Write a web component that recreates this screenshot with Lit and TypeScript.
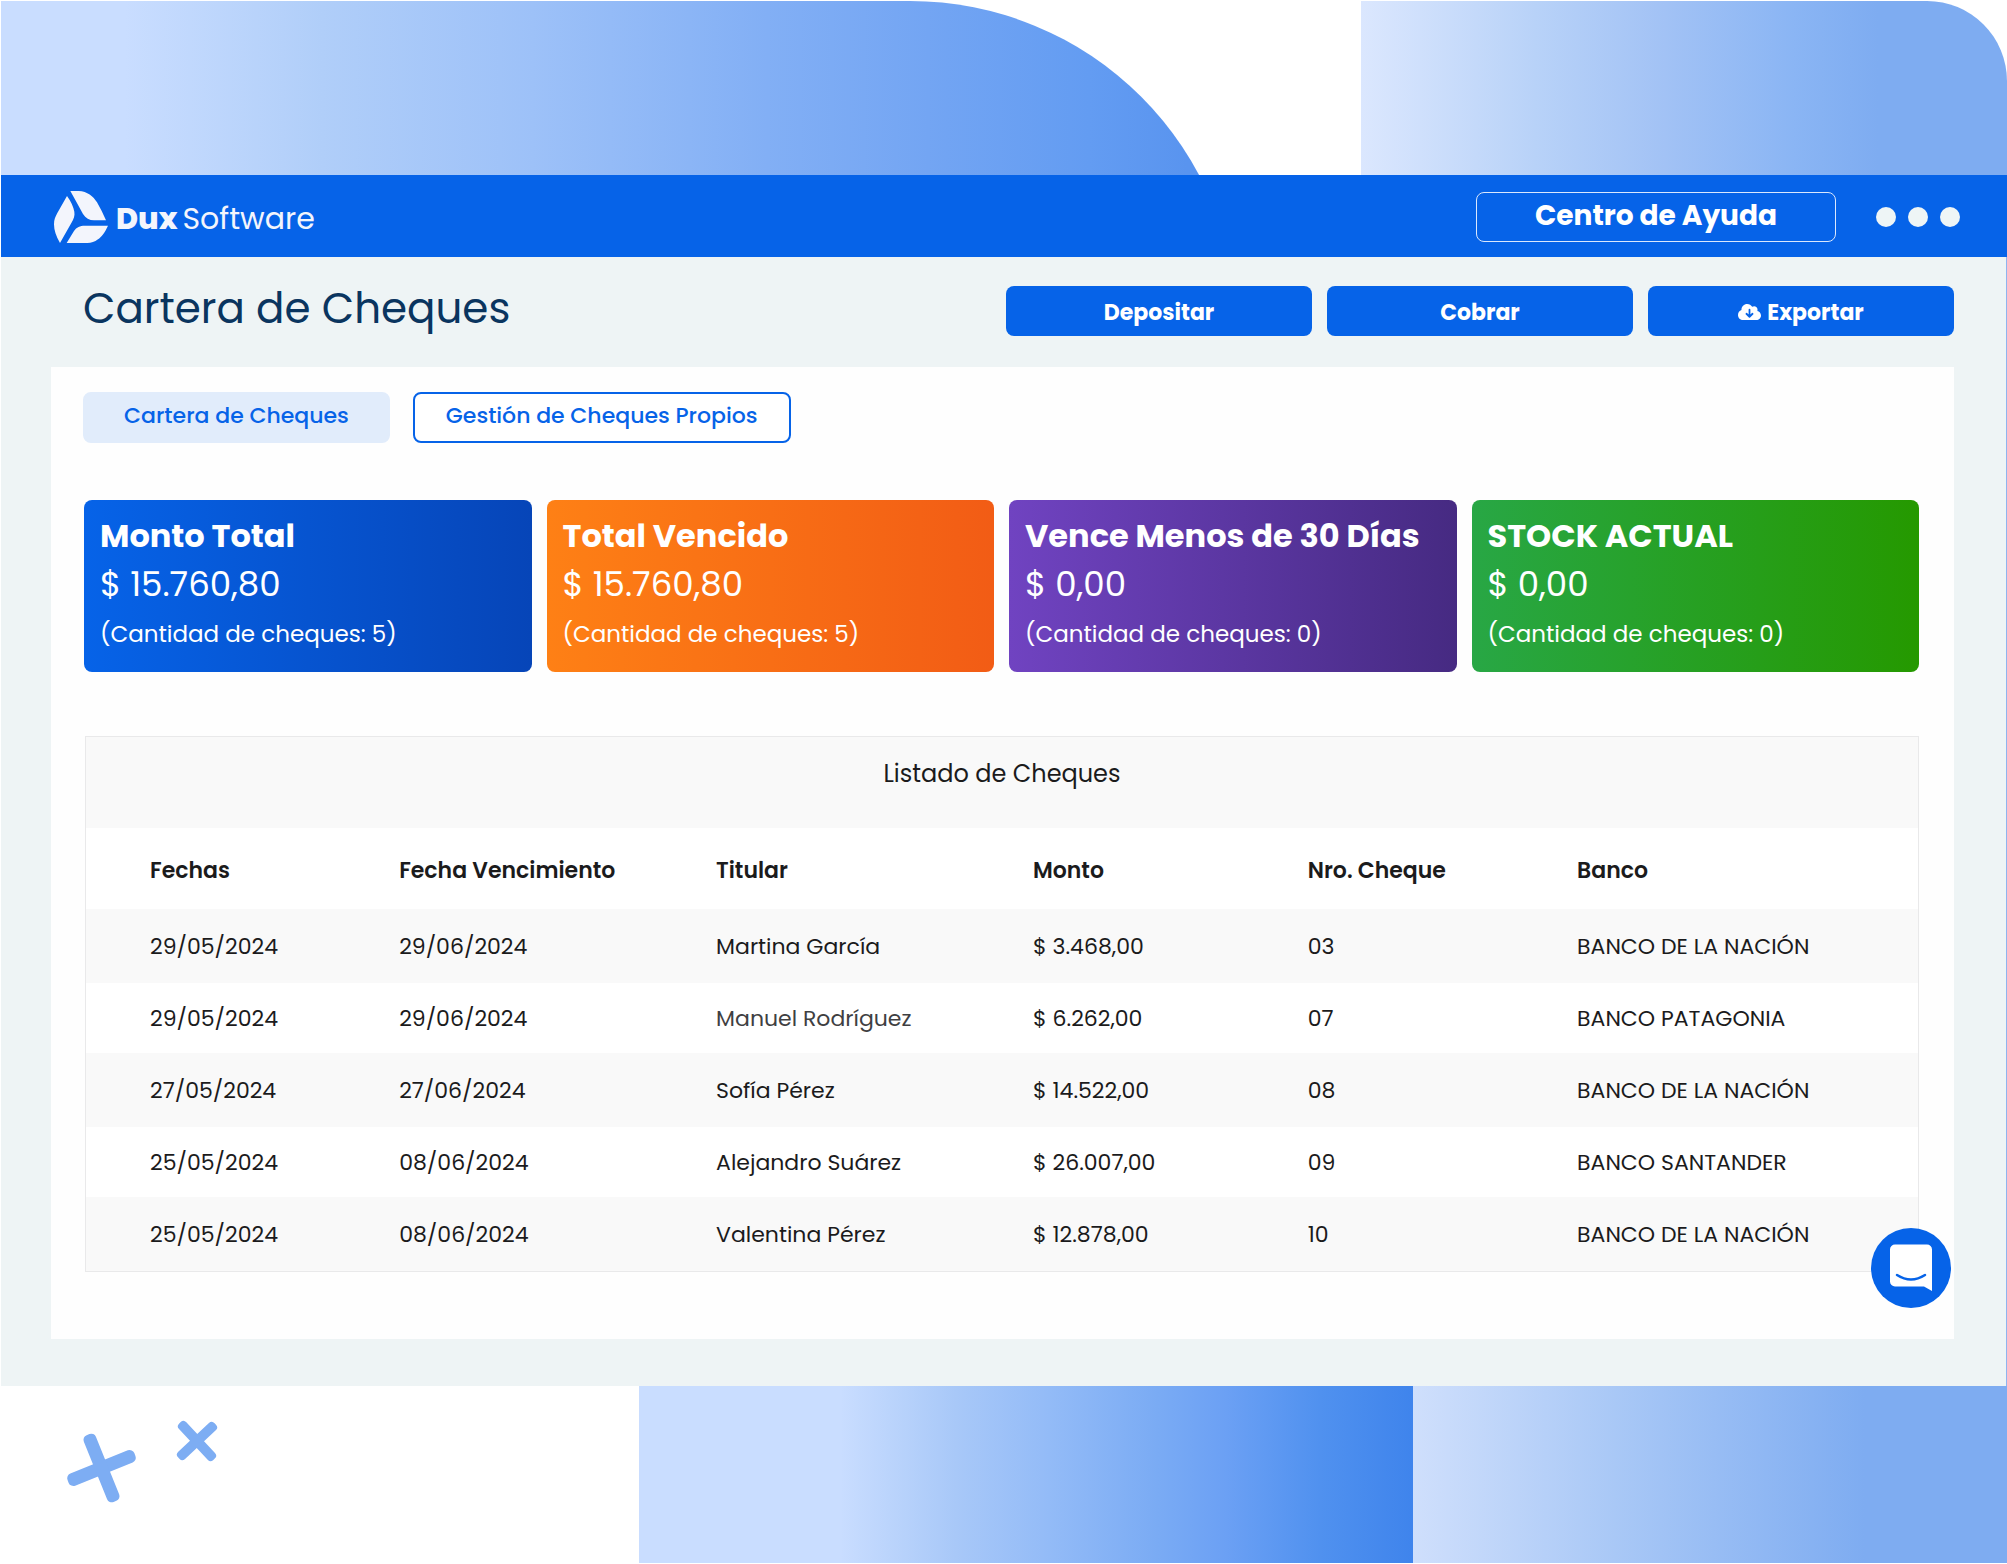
import { LitElement, html, css } from "lit";
import { customElement } from "lit/decorators.js";
import { classMap } from "lit/directives/class-map.js";

interface Summary {
  tone: string;
  title: string;
  amount: string;
  count: number;
}

interface Cheque {
  issued: string;
  due: string;
  holder: string;
  amount: string;
  number: string;
  bank: string;
  muted?: boolean;
}

const SUMMARIES: Summary[] = [
  { tone: "blue", title: "Monto Total", amount: "15.760,80", count: 5 },
  { tone: "orange", title: "Total Vencido", amount: "15.760,80", count: 5 },
  { tone: "purple", title: "Vence Menos de 30 Días", amount: "0,00", count: 0 },
  { tone: "green", title: "STOCK ACTUAL", amount: "0,00", count: 0 },
];

const COLUMNS = ["Fechas", "Fecha Vencimiento", "Titular", "Monto", "Nro. Cheque", "Banco"];

const CHEQUES: Cheque[] = [
  { issued: "29/05/2024", due: "29/06/2024", holder: "Martina García", amount: "3.468,00", number: "03", bank: "BANCO DE LA NACIÓN" },
  { issued: "29/05/2024", due: "29/06/2024", holder: "Manuel Rodríguez", amount: "6.262,00", number: "07", bank: "BANCO PATAGONIA", muted: true },
  { issued: "27/05/2024", due: "27/06/2024", holder: "Sofía Pérez", amount: "14.522,00", number: "08", bank: "BANCO DE LA NACIÓN" },
  { issued: "25/05/2024", due: "08/06/2024", holder: "Alejandro Suárez", amount: "26.007,00", number: "09", bank: "BANCO SANTANDER" },
  { issued: "25/05/2024", due: "08/06/2024", holder: "Valentina Pérez", amount: "12.878,00", number: "10", bank: "BANCO DE LA NACIÓN" },
];

@customElement("app-topbar")
export class AppTopbar extends LitElement {
  static styles = css`
    :host {
      display: flex;
      align-items: center;
      box-sizing: border-box;
      height: 82px;
      padding: 2px 47px 0 53px;
      background: #0663e8;
      font-family: Poppins, Inter, sans-serif;
    }
    .brand {
      display: flex;
      align-items: center;
      gap: 8px;
      color: #f3f5fc;
      text-decoration: none;
      font-size: 30px;
      line-height: 40px;
    }
    .mark {
      display: block;
      width: 54px;
      height: 52px;
    }
    .name {
      display: flex;
      gap: 5px;
      padding-top: 3px;
      font-weight: 400;
    }
    .name strong {
      font-weight: 800;
    }
    .help {
      box-sizing: border-box;
      width: 360px;
      height: 50px;
      margin-left: auto;
      padding: 0 0 2px;
      border: 1px solid #dbe8fd;
      border-radius: 8px;
      background: none;
      color: #fff;
      font: inherit;
      font-size: 28px;
      font-weight: 700;
      cursor: pointer;
    }
    .more {
      display: flex;
      gap: 12px;
      margin-left: 40px;
      padding: 0;
      border: 0;
      background: none;
      cursor: pointer;
    }
    .dot {
      width: 20px;
      height: 20px;
      border-radius: 50%;
      background: #eef5f6;
    }
  `;

  render() {
    return html`
      <a class="brand" href="#">
        <svg class="mark" viewBox="28 30 162 156" fill="#f3f5fc" aria-hidden="true">
          <path d="M77 30H102C128 31 146 46 157 64Q172 90 184 118H148C134 118 123 112 115 99Q97 66 77 30Z" />
          <path d="M67 45Q84 68 89 92C91 104 87 114 80 126L46 186C34 166 28 148 28 130C28 116 32 107 38 96Z" />
          <path d="M190 134C180 156 170 168 160 175C150 183 140 186 128 186H66L88 150C96 138 106 134 120 134Z" />
        </svg>
        <span class="name"><strong>Dux</strong><span>Software</span></span>
      </a>
      <button class="help" type="button">Centro de Ayuda</button>
      <button class="more" type="button" aria-label="Más opciones">
        <span class="dot"></span><span class="dot"></span><span class="dot"></span>
      </button>
    `;
  }
}

@customElement("summary-cards")
export class SummaryCards extends LitElement {
  static styles = css`
    :host {
      display: grid;
      grid-template-columns: repeat(4, 1fr);
      gap: 15px;
    }
    .card {
      padding: 12px 16px;
      border-radius: 8px;
      color: #fff;
      line-height: 48px;
      white-space: nowrap;
    }
    .title {
      margin: 0;
      font-size: 32px;
      font-weight: 700;
    }
    .amount {
      margin: 0;
      font-size: 34px;
      font-weight: 400;
    }
    .count {
      margin: 0;
      font-size: 23px;
      font-weight: 400;
      line-height: 52px;
    }
    .blue {
      background: linear-gradient(90deg, #0663e8, #0645b8);
    }
    .orange {
      background: linear-gradient(90deg, #fe8015, #f25c15);
    }
    .purple {
      background: linear-gradient(90deg, #7043c1, #462a82);
    }
    .green {
      background: linear-gradient(90deg, #28a745, #259900);
    }
  `;

  render() {
    return SUMMARIES.map(
      (s) => html`
        <section class=${classMap({ card: true, [s.tone]: true })}>
          <h2 class="title">${s.title}</h2>
          <p class="amount">$ ${s.amount}</p>
          <p class="count">(Cantidad de cheques: ${s.count})</p>
        </section>
      `
    );
  }
}

@customElement("cheque-table")
export class ChequeTable extends LitElement {
  static styles = css`
    :host {
      display: block;
      border: 1px solid #e9e9ea;
      background: #fff;
      color: #1b1b1c;
    }
    .table {
      width: 100%;
      table-layout: fixed;
      border-collapse: collapse;
      font-size: 22px;
    }
    .caption {
      padding-bottom: 18px;
      background: #f9f9f9;
      font-size: 24px;
      line-height: 73px;
    }
    .head,
    .cell {
      padding: 0 0 0 64px;
      text-align: left;
      white-space: nowrap;
    }
    .head {
      height: 81px;
      padding-top: 4px;
      box-sizing: border-box;
      font-weight: 600;
    }
    .cell {
      height: 70px;
      font-weight: 400;
    }
    .row:nth-child(odd) {
      background: #f9f9f9;
    }
    .row:nth-child(odd) .cell {
      height: 74px;
    }
    .muted {
      color: #3f3f42;
    }
    .c1 { width: 13.6%; }
    .c2 { width: 17.3%; }
    .c3 { width: 17.3%; }
    .c4 { width: 15%; }
    .c5 { width: 14.7%; }
  `;

  render() {
    return html`
      <table class="table">
        <caption class="caption">Listado de Cheques</caption>
        <colgroup>
          <col class="c1" /><col class="c2" /><col class="c3" /><col class="c4" /><col class="c5" /><col />
        </colgroup>
        <thead>
          <tr>${COLUMNS.map((c) => html`<th class="head" scope="col">${c}</th>`)}</tr>
        </thead>
        <tbody>
          ${CHEQUES.map(
            (c) => html`
              <tr class="row">
                <td class="cell">${c.issued}</td>
                <td class="cell">${c.due}</td>
                <td class=${classMap({ cell: true, muted: !!c.muted })}>${c.holder}</td>
                <td class="cell">$ ${c.amount}</td>
                <td class="cell">${c.number}</td>
                <td class="cell">${c.bank}</td>
              </tr>
            `
          )}
        </tbody>
      </table>
    `;
  }
}

@customElement("app-root")
export class AppRoot extends LitElement {
  static styles = css`
    :host {
      display: flex;
      flex-direction: column;
      min-height: 100vh;
      box-sizing: border-box;
      border-left: 1px solid #fff;
      background: #fff;
      font-family: Poppins, Inter, sans-serif;
    }
    .band-top {
      display: flex;
      justify-content: space-between;
      height: 174px;
      padding-top: 1px;
      overflow: hidden;
    }
    .arc {
      width: 61.6%;
      height: 400px;
      border-top-right-radius: 327px;
      background: linear-gradient(90deg, #c9ddff 10%, #b0cef9 26%, #9dc1f8 43%, #82aff5 62%, #73a5f3 75%, #639cf2 88%, #5994ef 96%);
    }
    .corner {
      width: 32.2%;
      height: 400px;
      border-top-right-radius: 80px;
      background: linear-gradient(90deg, #dbe7fe, #b8d2f8 27%, #a2c2f5 47%, #8ab5f4 67%, #7eacf1 80%);
    }
    .band-bottom {
      display: grid;
      grid-template-columns: 638fr 774fr 594fr;
      flex: 1;
      min-height: 177px;
      padding-bottom: 1px;
      box-sizing: border-box;
    }
    .confetti {
      padding: 32px 0 0 64px;
    }
    .crosses {
      display: block;
      width: 160px;
      height: 92px;
    }
    .block-deep {
      background: linear-gradient(90deg, #c9ddff 26%, #a8c8f8 41%, #93bbf7 53%, #7aabf4 67%, #6ba0f4 76%, #5091ef 88%, #3f84ec);
    }
    .block-soft {
      background: linear-gradient(90deg, #cfdffc, #a9c8f6 34%, #7eacf1 76%);
    }
    .body {
      padding: 0 52px 47px 50px;
      border-right: 1px solid #8fb4ee;
      background: #eef4f5;
    }
    .heading {
      display: flex;
      align-items: flex-start;
      gap: 15px;
      padding: 29px 0 31px;
    }
    .title {
      flex: 1;
      margin: 0;
      padding-left: 32px;
      color: #0a355f;
      font-size: 42px;
      font-weight: 400;
      line-height: 46px;
    }
    .action {
      display: flex;
      align-items: center;
      justify-content: center;
      gap: 6px;
      width: 306px;
      height: 50px;
      padding: 2px 0 0;
      border: 0;
      border-radius: 8px;
      background: #0663e8;
      color: #fff;
      font: inherit;
      font-size: 22px;
      font-weight: 700;
      cursor: pointer;
    }
    .cloud {
      width: 23px;
      height: 18px;
    }
    .panel {
      position: relative;
      padding: 25px 35px 67px 33px;
      background: #fefefe;
    }
    .tabs {
      display: flex;
      gap: 23px;
      margin: 0 0 57px -1px;
    }
    .tab {
      box-sizing: border-box;
      height: 51px;
      padding: 0 31px 4px;
      border: 2px solid #0663e8;
      border-radius: 8px;
      background: #fff;
      color: #0663e8;
      font: inherit;
      font-size: 22px;
      font-weight: 500;
      cursor: pointer;
    }
    .tab-active {
      padding: 0 39px 4px;
      border-color: #e1ecfb;
      background: #e1ecfb;
    }
    .list {
      margin: 64px 0 0 1px;
    }
    .chat {
      position: absolute;
      right: 3px;
      bottom: 31px;
      width: 80px;
      height: 80px;
      padding: 0;
      border: 0;
      border-radius: 50%;
      background: #0663e8;
      cursor: pointer;
    }
    .bubble {
      display: block;
      width: 80px;
      height: 80px;
    }
  `;

  render() {
    return html`
      <div class="band-top">
        <div class="arc"></div>
        <div class="corner"></div>
      </div>
      <app-topbar></app-topbar>
      <main class="body">
        <header class="heading">
          <h1 class="title">Cartera de Cheques</h1>
          <button class="action" type="button">Depositar</button>
          <button class="action" type="button">Cobrar</button>
          <button class="action" type="button">
            <svg class="cloud" viewBox="0 32 640 448" aria-hidden="true">
              <path fill="#fff" d="M537.6 226.6c4.1-10.7 6.4-22.4 6.4-34.6 0-53-43-96-96-96-19.7 0-38.1 6-53.3 16.2C367 64.2 315.3 32 256 32c-88.4 0-160 71.6-160 160 0 2.7.1 5.4.2 8.1C40.2 219.8 0 273.2 0 336c0 79.5 64.5 144 144 144h368c70.7 0 128-57.3 128-128 0-61.9-44-113.6-102.4-125.4z" />
              <path fill="none" stroke="#0663e8" stroke-width="50" stroke-linecap="round" stroke-linejoin="round" d="M320 190V385M235 305L320 388L405 305" />
            </svg>
            Exportar
          </button>
        </header>
        <div class="panel">
          <nav class="tabs">
            <button class="tab tab-active" type="button">Cartera de Cheques</button>
            <button class="tab" type="button">Gestión de Cheques Propios</button>
          </nav>
          <summary-cards></summary-cards>
          <cheque-table class="list"></cheque-table>
          <button class="chat" type="button" aria-label="Abrir chat">
            <svg class="bubble" viewBox="0 0 80 80" aria-hidden="true">
              <path fill="#fff" d="M24 16.500H56A5 5 0 0 1 61 21.500V63L53 58.500H24A5 5 0 0 1 19 53.500V21.500A5 5 0 0 1 24 16.500Z" />
              <path fill="none" stroke="#0663e8" stroke-width="2.500" stroke-linecap="round" d="M26 47Q40 56 54 47" />
            </svg>
          </button>
        </div>
      </main>
      <div class="band-bottom">
        <div class="confetti">
          <svg class="crosses" viewBox="65 1418 160 92" fill="#7dadf3" aria-hidden="true">
            <g transform="rotate(-22 101.500 1468)">
              <rect x="65.500" y="1461.500" width="72" height="13" rx="5" />
              <rect x="95" y="1432" width="13" height="72" rx="5" />
            </g>
            <g transform="translate(0 11) rotate(-43 197 1430)">
              <rect x="172" y="1425" width="50" height="10" rx="4" />
              <rect x="192" y="1405" width="10" height="50" rx="4" />
            </g>
          </svg>
        </div>
        <div class="block-deep"></div>
        <div class="block-soft"></div>
      </div>
    `;
  }
}
